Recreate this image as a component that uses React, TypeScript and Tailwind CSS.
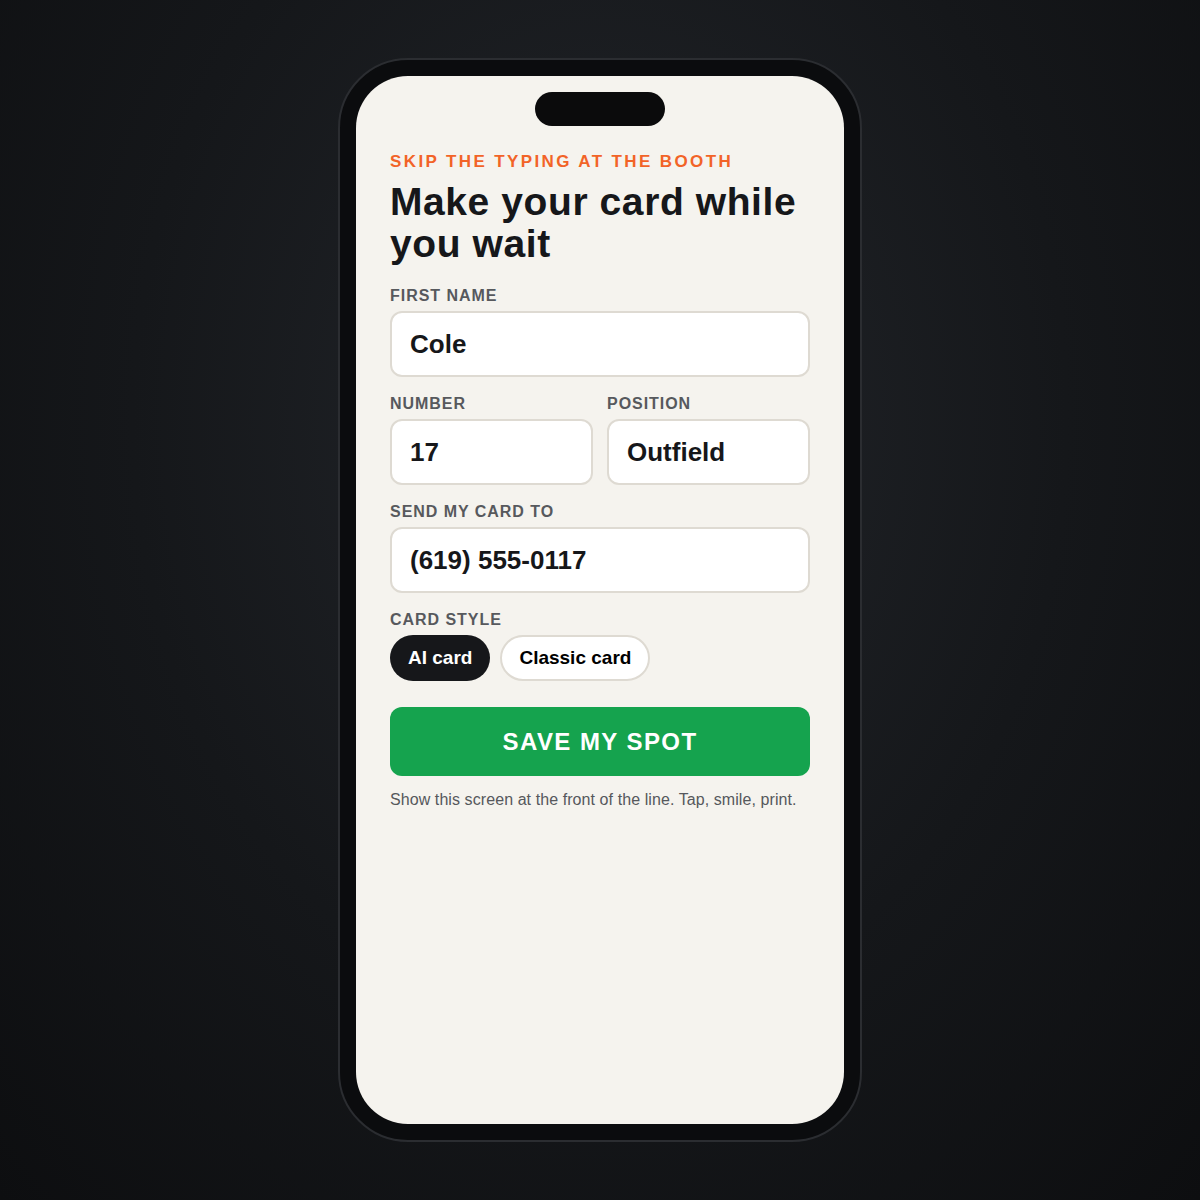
import React from "react";

const font = { fontFamily: '"Liberation Sans", Arial, Helvetica, sans-serif' };

function Label({ children }: { children: React.ReactNode }) {
  return (
    <div className="mt-[2px] text-[16px] leading-[18px] font-bold tracking-[0.06em] text-[#57595d] mb-[6px]">
      {children}
    </div>
  );
}

function Field({ value }: { value: string }) {
  return (
    <div className="h-[66px] rounded-[12px] border-2 border-[#dedad2] bg-white flex items-center px-[18px] text-[26px] font-bold text-[#16171a]">
      {value}
    </div>
  );
}

export default function App() {
  return (
    <div
      className="w-[1200px] h-[1200px] flex items-center justify-center bg-[radial-gradient(ellipse_at_50%_35%,#23262b_0%,#15171a_55%,#0d0e10_100%)]"
      style={font}
    >
      <div className="w-[524px] h-[1084px] rounded-[70px] border-2 border-[#2b2d31] bg-[#0b0c0e] p-[16px]">
        <div className="w-full h-full rounded-[52px] bg-[#f5f3ee] overflow-hidden flex flex-col px-[34px] pt-[16px]">
          <div className="flex justify-center">
            <div className="w-[130px] h-[34px] rounded-full bg-[#0b0b0c]" />
          </div>
          <div className="mt-[26px] text-[17px] leading-[20px] font-bold tracking-[0.14em] text-[#f26327]">
            SKIP THE TYPING AT THE BOOTH
          </div>
          <h1 className="mt-[9px] text-[39px] leading-[42px] font-bold text-[#16171a] tracking-[0.015em]">
            Make your card while you wait
          </h1>
          <div className="mt-[20px]">
            <Label>FIRST NAME</Label>
            <Field value="Cole" />
          </div>
          <div className="mt-[16px] grid grid-cols-2 gap-[14px]">
            <div>
              <Label>NUMBER</Label>
              <Field value="17" />
            </div>
            <div>
              <Label>POSITION</Label>
              <Field value="Outfield" />
            </div>
          </div>
          <div className="mt-[16px]">
            <Label>SEND MY CARD TO</Label>
            <Field value="(619) 555-0117" />
          </div>
          <div className="mt-[16px]">
            <Label>CARD STYLE</Label>
            <div className="flex gap-[10px]">
              <div className="h-[46px] px-[18px] rounded-full bg-[#16171a] text-white text-[19px] font-bold flex items-center">
                AI card
              </div>
              <div className="h-[46px] px-[17px] rounded-full bg-white border-2 border-[#dedad2] text-black text-[19px] font-bold flex items-center">
                Classic card
              </div>
            </div>
          </div>
          <button className="mt-[26px] h-[69px] rounded-[12px] bg-[#15a34e] text-white text-[24px] font-bold tracking-[0.06em] flex items-center justify-center">
            SAVE MY SPOT
          </button>
          <p className="mt-[14px] text-[16px] leading-[20px] tracking-[0.005em] text-[#56585c]">
            Show this screen at the front of the line. Tap, smile, print.
          </p>
        </div>
      </div>
    </div>
  );
}
